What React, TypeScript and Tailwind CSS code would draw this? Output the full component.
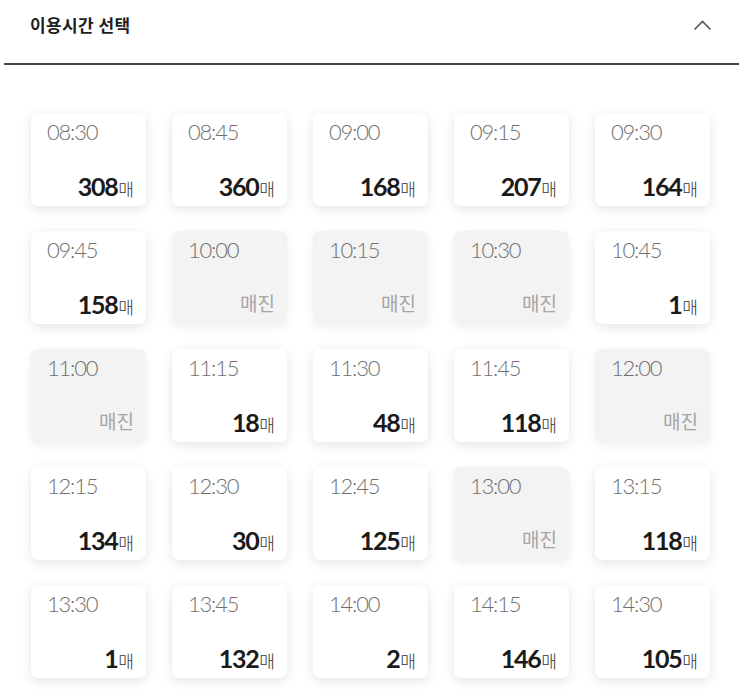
import React from "react";

type Slot = { t: string; n: number | null };

const slots: Slot[] = [
  { t: "08:30", n: 308 },
  { t: "08:45", n: 360 },
  { t: "09:00", n: 168 },
  { t: "09:15", n: 207 },
  { t: "09:30", n: 164 },
  { t: "09:45", n: 158 },
  { t: "10:00", n: null },
  { t: "10:15", n: null },
  { t: "10:30", n: null },
  { t: "10:45", n: 1 },
  { t: "11:00", n: null },
  { t: "11:15", n: 18 },
  { t: "11:30", n: 48 },
  { t: "11:45", n: 118 },
  { t: "12:00", n: null },
  { t: "12:15", n: 134 },
  { t: "12:30", n: 30 },
  { t: "12:45", n: 125 },
  { t: "13:00", n: null },
  { t: "13:15", n: 118 },
  { t: "13:30", n: 1 },
  { t: "13:45", n: 132 },
  { t: "14:00", n: 2 },
  { t: "14:15", n: 146 },
  { t: "14:30", n: 105 },
];

const lato = { fontFamily: "Lato, 'Noto Sans CJK KR', sans-serif" };
const kr = { fontFamily: "'Noto Sans CJK KR', 'Noto Sans', sans-serif" };

export default function App() {
  return (
    <div className="w-[743px] h-[694px] bg-white overflow-hidden">
      <div className="flex justify-between pl-[30px] pr-[31px] pt-[13px] h-[63px] items-start">
        <div
          className="text-[17px] leading-[24px] font-bold text-[#1e1e1e] tracking-[0.4px]"
          style={kr}
        >
          이용시간 선택
        </div>
        <svg width="19" height="11" viewBox="0 0 19 11" className="mt-[7px]">
          <path d="M1.5 9.5 L9.5 1.5 L17.5 9.5" fill="none" stroke="#555" strokeWidth="1.6" />
        </svg>
      </div>
      <div className="mx-[4px] h-[2px] bg-[#444]" />
      <div className="grid grid-cols-[repeat(5,115px)] gap-x-[26px] gap-y-[25px] pl-[31px] pt-[48px]">
        {slots.map((s) => {
          const sold = s.n === null;
          return (
            <div
              key={s.t}
              className={`h-[93px] rounded-[7px] flex flex-col justify-between pl-[16px] pr-[12px] pt-[8px] pb-[7px] ${
                sold
                  ? "bg-[#f3f3f3] shadow-[0_3px_10px_rgba(0,0,0,0.07)]"
                  : "bg-white shadow-[0_3px_12px_rgba(0,0,0,0.11)]"
              }`}
            >
              <div
                className="text-[22px] leading-[22px] font-light text-[#707070] tracking-[-1.2px]"
                style={lato}
              >
                {s.t}
              </div>
              {sold ? (
                <div
                  className="text-right text-[19px] leading-[24px] text-[#a5a5a5] pb-[2px]"
                  style={kr}
                >
                  매진
                </div>
              ) : (
                <div className="flex items-baseline justify-end">
                  <span
                    className="text-[25px] leading-[26px] font-bold text-[#1a1a1a] tracking-[-1.3px]"
                    style={lato}
                  >
                    {s.n}
                  </span>
                  <span className="text-[17px] leading-[20px] font-light text-[#333] ml-[1px]" style={kr}>
                    매
                  </span>
                </div>
              )}
            </div>
          );
        })}
      </div>
    </div>
  );
}
